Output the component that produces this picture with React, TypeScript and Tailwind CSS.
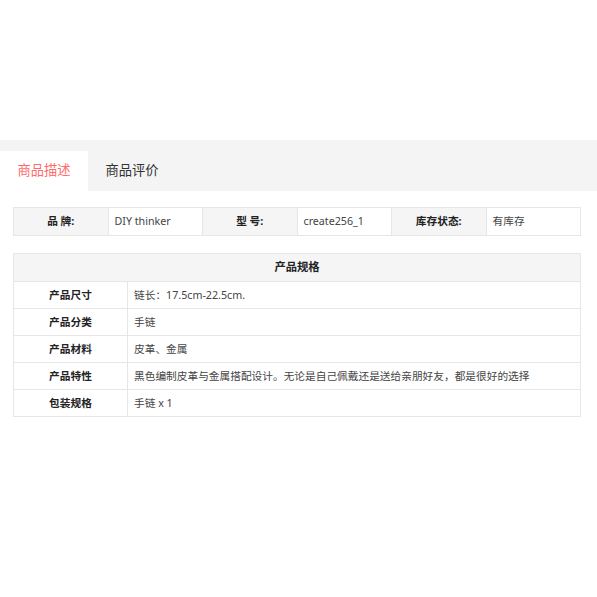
import { Fragment } from "react";

const font = "font-['Noto_Sans','Noto_Sans_CJK_SC',sans-serif]";

const info = [
  ["品 牌:", "DIY thinker"],
  ["型 号:", "create256_1"],
  ["库存状态:", "有库存"],
];

const specs = [
  ["产品尺寸", "链长：17.5cm-22.5cm."],
  ["产品分类", "手链"],
  ["产品材料", "皮革、金属"],
  ["产品特性", "黑色编制皮革与金属搭配设计。无论是自己佩戴还是送给亲朋好友，都是很好的选择"],
  ["包装规格", "手链 x 1"],
];

export default function App() {
  return (
    <div className={`w-[597px] h-[597px] bg-white ${font}`}>
      <div className="h-[140px]" />
      {/* tabs */}
      <div className="flex items-end h-[51px] bg-[#f4f4f4]">
        <div className="w-[88px] h-[40px] bg-white flex items-center justify-center text-[13.3px] text-[#ff6b6b]">
          商品描述
        </div>
        <div className="w-[88px] h-[40px] flex items-center justify-center text-[13.3px] text-[#333]">
          商品评价
        </div>
      </div>

      {/* basic info */}
      <table className="mt-[16px] ml-[13px] w-[568px] table-fixed border-collapse text-[10.7px]">
        <tbody>
          <tr className="h-[28px]">
            {info.map(([label, value]) => (
              <Fragment key={label}>
                <td className="border border-[#e6e6e6] bg-[#f5f5f5] text-center font-bold text-[#222]">
                  {label}
                </td>
                <td className="border border-[#e6e6e6] px-[6px] text-[#444]">
                  {value}
                </td>
              </Fragment>
            ))}
          </tr>
        </tbody>
      </table>

      {/* specs */}
      <table className="mt-[17px] ml-[13px] w-[568px] table-fixed border-collapse text-[10.7px]">
        <colgroup>
          <col className="w-[114px]" />
          <col />
        </colgroup>
        <tbody>
          <tr className="h-[28px]">
            <td
              colSpan={2}
              className="border border-[#e6e6e6] bg-[#f5f5f5] text-center font-bold text-[11.3px] text-[#222]"
            >
              产品规格
            </td>
          </tr>
          {specs.map(([label, value]) => (
            <tr key={label} className="h-[27px]">
              <td className="border border-[#e6e6e6] text-center font-bold text-[#222]">
                {label}
              </td>
              <td className="border border-[#e6e6e6] px-[6px] text-[#444]">
                {value}
              </td>
            </tr>
          ))}
        </tbody>
      </table>
    </div>
  );
}
